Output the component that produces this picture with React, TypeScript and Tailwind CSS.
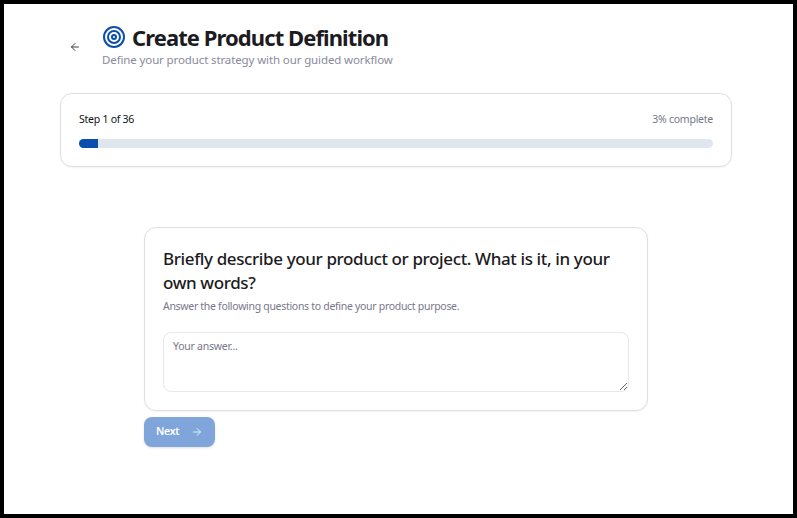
import { ArrowLeft, ArrowRight, Target } from 'lucide-react';

export default function App() {
  return (
    <div className="h-[518px] w-[797px] overflow-hidden border-4 border-black bg-white font-['Noto_Sans',sans-serif] text-[#1c1b22]">
      <div className="ml-[56px] w-[672px] pt-[19px]">
        <header className="flex items-center">
          <button className="ml-[9px] mt-[3px] flex w-[28px] justify-start text-[#3f3f46]">
            <ArrowLeft size={12} strokeWidth={2} />
          </button>
          <div className="ml-[5px]">
            <div className="flex items-center gap-[6px]">
              <Target size={24} strokeWidth={2} className="text-[#0a4fae]" />
              <h1 className="text-[22px] leading-[28px] font-bold tracking-[-0.92px]">Create Product Definition</h1>
            </div>
            <p className="text-[11.5px] leading-[17px] tracking-[-0.12px] text-[#8a8a9c]">Define your product strategy with our guided workflow</p>
          </div>
        </header>

        <section className="mt-[25px] rounded-xl border border-[#dedfe6] bg-white px-[18px] pt-[16px] pb-[18px] shadow-xs">
          <div className="flex items-center justify-between text-[10.5px] leading-[18px] tracking-[-0.25px]">
            <span className="text-[#111118]">Step 1 of 36</span>
            <span className="text-[#77778a]">3% complete</span>
          </div>
          <div className="mt-[11px] h-[9px] overflow-hidden rounded-full bg-[#e0e6ee]">
            <div className="h-full w-[3%] bg-[#0a4fae]" />
          </div>
        </section>

        <div className="ml-[84px] mt-[60px] w-[504px]">
          <section className="rounded-xl border border-[#dedfe6] bg-white px-[18px] pt-[19px] pb-[18px] shadow-xs">
            <h2 className="text-[17px] leading-[24px] font-medium tracking-[-0.38px]">
              Briefly describe your product or project. What is it, in your own words?
            </h2>
            <p className="mt-[2px] text-[10.5px] leading-[18px] tracking-[-0.3px] text-[#77778a]">
              Answer the following questions to define your product purpose.
            </p>
            <textarea
              placeholder="Your answer..."
              className="mt-[17px] block h-[60px] w-full rounded-lg border border-[#e8e8ee] bg-white px-[9px] py-[5px] text-[10.5px] leading-[16px] tracking-[-0.25px] placeholder:text-[#77778a]"
            />
          </section>
          <button className="mt-[6px] flex h-[30px] w-[71px] items-center rounded-lg bg-[#7fa5da] pl-[12px] text-[10.5px] font-semibold tracking-[-0.3px] text-white shadow-sm">
            Next
            <ArrowRight size={12} className="ml-[12px] opacity-80" />
          </button>
        </div>
      </div>
    </div>
  );
}
